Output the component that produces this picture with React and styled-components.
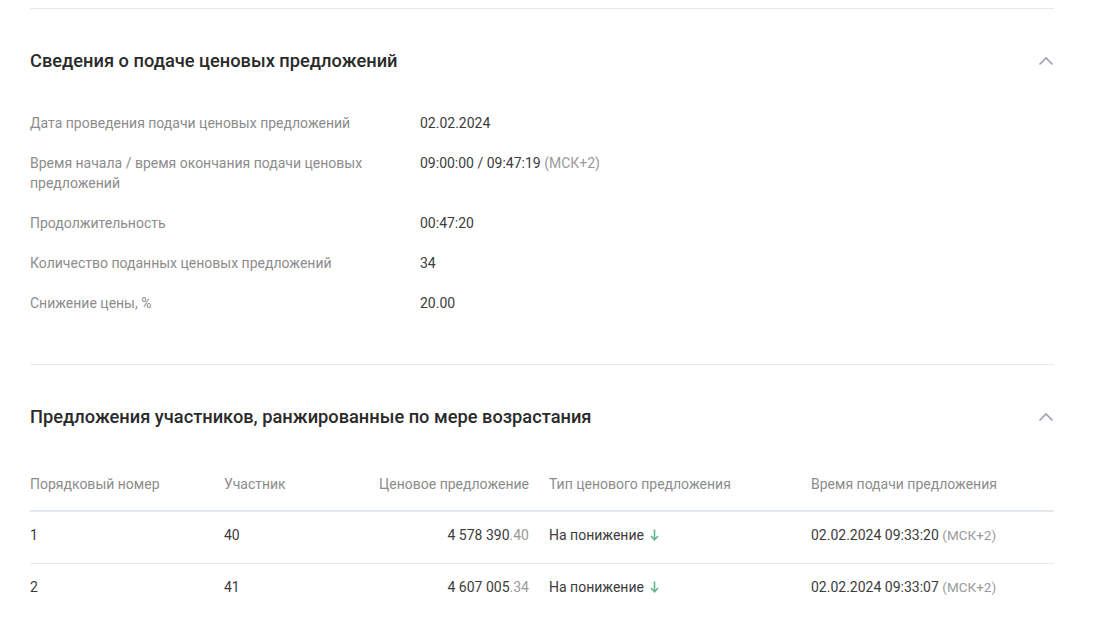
import styled, { createGlobalStyle } from "styled-components";

const GlobalStyle = createGlobalStyle`
  body {
    margin: 0;
    background: #fff;
    font-family: Roboto, "Noto Sans", Arial, sans-serif;
    color: #333;
  }
`;

const details = [
  { label: "Дата проведения подачи ценовых предложений", value: "02.02.2024" },
  {
    label: "Время начала / время окончания подачи ценовых предложений",
    value: "09:00:00 / 09:47:19",
    zone: "(МСК+2)",
  },
  { label: "Продолжительность", value: "00:47:20" },
  { label: "Количество поданных ценовых предложений", value: "34" },
  { label: "Снижение цены, %", value: "20.00" },
];

const bids = [
  { n: "1", who: "40", price: "4 578 390", cents: ".40", time: "02.02.2024 09:33:20" },
  { n: "2", who: "41", price: "4 607 005", cents: ".34", time: "02.02.2024 09:33:07" },
];

const Chevron = () => (
  <svg width="16" height="10" viewBox="0 0 16 10" fill="none">
    <path d="M1.5 8.5L8 2l6.5 6.5" stroke="#9aa3ab" strokeWidth="1.6" />
  </svg>
);

const DownArrow = () => (
  <svg width="9" height="12" viewBox="0 0 9 12" fill="none">
    <path d="M4.5 0.5v10M1 7l3.5 3.8L8 7" stroke="#66b493" strokeWidth="1.6" />
  </svg>
);

const App = () => {
  return (
    <Page>
      <GlobalStyle />
      <Section>
        <Header>
          <Title>Сведения о подаче ценовых предложений</Title>
          <Chevron />
        </Header>
        <InfoList>
          {details.map((d) => (
            <InfoRow key={d.label}>
              <Label>{d.label}</Label>
              <Value>
                {d.value}
                {d.zone && <Zone> {d.zone}</Zone>}
              </Value>
            </InfoRow>
          ))}
        </InfoList>
      </Section>
      <Section>
        <Header>
          <Title>Предложения участников, ранжированные по мере возрастания</Title>
          <Chevron />
        </Header>
        <Table>
          <HeadRow>
            <Cell>Порядковый номер</Cell>
            <Cell>Участник</Cell>
            <Cell $right>Ценовое предложение</Cell>
            <Cell>Тип ценового предложения</Cell>
            <Cell>Время подачи предложения</Cell>
          </HeadRow>
          {bids.map((b) => (
            <BodyRow key={b.n}>
              <Cell>{b.n}</Cell>
              <Cell>{b.who}</Cell>
              <Cell $right>
                {b.price}
                <Cents>{b.cents}</Cents>
              </Cell>
              <Cell>
                <TypeLabel>
                  На понижение <DownArrow />
                </TypeLabel>
              </Cell>
              <Cell>
                {b.time} <SmallZone>(МСК+2)</SmallZone>
              </Cell>
            </BodyRow>
          ))}
        </Table>
      </Section>
    </Page>
  );
};

const Page = styled.div`
  width: 1024px;
  padding: 8px 0 0 30px;
  height: 633px;
  overflow: hidden;
`;

const Section = styled.section`
  border-top: 1px solid #e6e9ec;
  padding-bottom: 51px;
`;

const Header = styled.div`
  display: flex;
  align-items: center;
  justify-content: space-between;
  padding-top: 40px;
  height: 24px;
  box-sizing: content-box;
`;

const Title = styled.h2`
  margin: 0;
  font-size: 18.25px;
  line-height: 24px;
  font-weight: 500;
  color: #2a2a2a;
`;

const InfoList = styled.div`
  display: flex;
  flex-direction: column;
  gap: 20px;
  margin-top: 40px;
`;

const InfoRow = styled.div`
  display: grid;
  grid-template-columns: 390px 1fr;
  font-size: 14px;
  line-height: 20px;
`;

const Label = styled.div`
  color: #8c8c8c;
  max-width: 345px;
`;

const Value = styled.div`
  color: #3c3c3c;
`;

const Zone = styled.span`
  color: #9a9a9a;
`;

const Table = styled.div`
  margin-top: 45px;
  font-size: 14px;
  line-height: 20px;
`;

const gridCols = `194px 100px 225px 262px 1fr`;

const HeadRow = styled.div`
  display: grid;
  grid-template-columns: ${gridCols};
  color: #8c8c8c;
  padding-bottom: 16px;
  border-bottom: 2px solid #e3e8ec;
`;

const BodyRow = styled.div`
  display: grid;
  grid-template-columns: ${gridCols};
  align-items: center;
  padding: 13px 0 18px;
  color: #3c3c3c;
  border-bottom: 1px solid #e6eaed;
  &:last-child {
    border-bottom: none;
  }
`;

const Cell = styled.div`
  height: 20px;
  text-align: ${(p) => (p.$right ? "right" : "left")};
  padding-right: ${(p) => (p.$right ? "20px" : "0")};
  white-space: nowrap;
`;

const Cents = styled.span`
  color: #9a9a9a;
`;

const TypeLabel = styled.span`
  display: inline-flex;
  align-items: center;
  gap: 6px;
`;

const SmallZone = styled.span`
  color: #9a9a9a;
  font-size: 13.5px;
`;

export default App;
